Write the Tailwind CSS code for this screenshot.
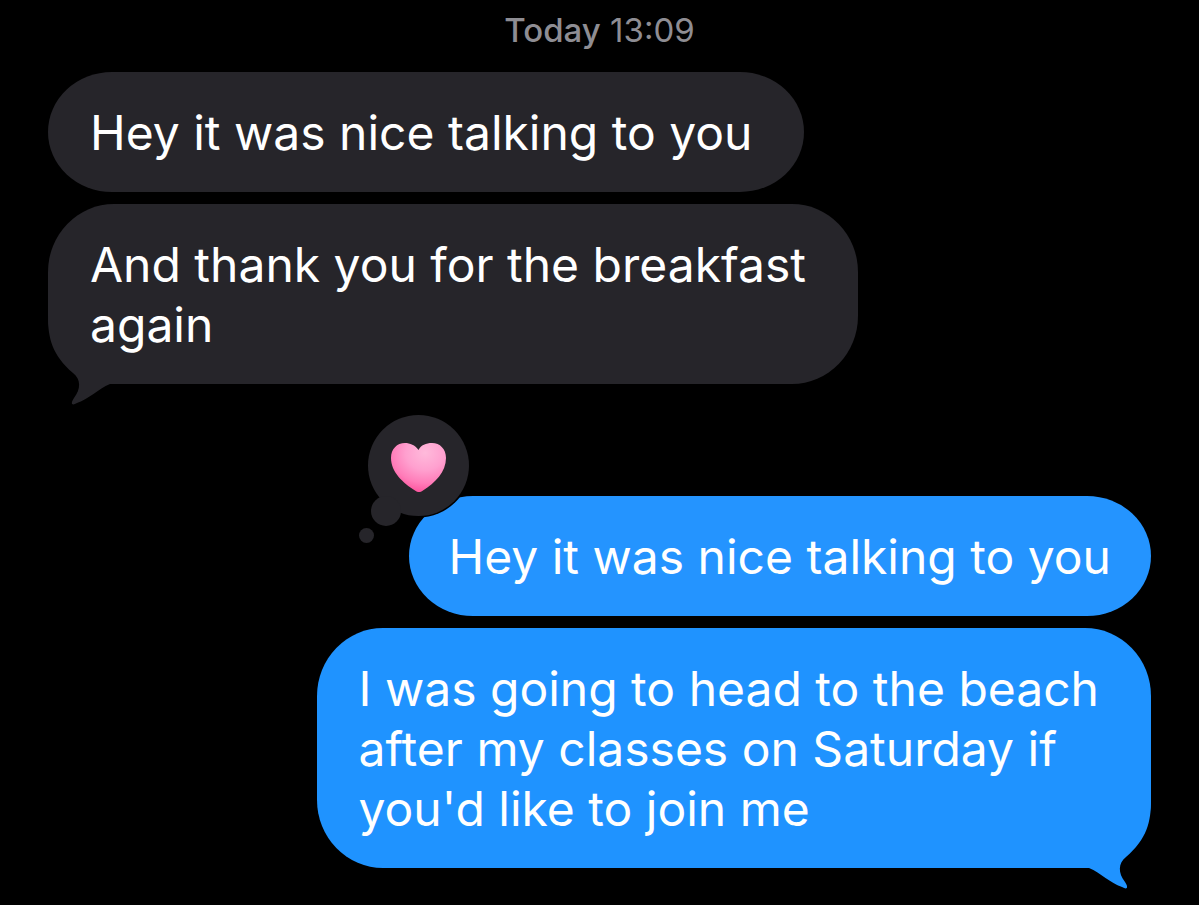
<!DOCTYPE html>
<html lang="en">
<head>
    <meta charset="UTF-8" />
    <meta name="viewport" content="width=device-width, initial-scale=1" />
    <title>Messages</title>
    <!-- Tailwind CSS -->
    <script src="https://cdn.jsdelivr.net/npm/@tailwindcss/browser@4"></script>
</head>
<body class="bg-black min-h-screen font-['Inter',sans-serif]">
    <main class="px-12 pt-[7px]">
        <p class="text-center text-[33px] leading-[46px] text-[#8e8d93]"><time><span class="font-medium">Today</span> 13:09</time></p>

        <ol class="mt-[19px] flex flex-col text-[48px] leading-[60px] text-white">
            <!-- Received -->
            <li class="self-start rounded-[64px/60px] bg-[#26252a] pt-[31px] pb-[29px] pl-[42px] pr-[52px]">
                <p>Hey it was nice talking to you</p>
            </li>
            <li class="relative mt-3 self-start rounded-[66px/68px] bg-[#26252a] pt-[31px] pb-[29px] pl-[42px] pr-[52px]">
                <svg class="absolute -bottom-6 left-0 w-[72px] h-[92px]" viewBox="0 0 72 92" fill="#26252a" aria-hidden="true">
                    <path d="M0 0C0 22 4 39 25 57C33 63 33 73 26 82C22 88 24 90 29 87C41 83 50 73 62 68H72V0Z" />
                </svg>
                <p class="relative">And thank you for the breakfast<br />again</p>
            </li>

            <!-- Sent -->
            <li class="relative mt-28 self-end rounded-[64px/60px] bg-[#2494ff] px-10 pt-[31px] pb-[29px]">
                <svg class="absolute -top-[84px] -left-[53px] w-[116px] h-[134px]" viewBox="0 0 116 134" role="img" aria-label="Heart reaction">
                    <defs>
                        <radialGradient id="heart" cx="0.62" cy="0.2" r="0.88">
                            <stop offset="0" stop-color="#ffbadb" />
                            <stop offset="0.4" stop-color="#ffa0cf" />
                            <stop offset="0.7" stop-color="#ff7db9" />
                            <stop offset="1" stop-color="#fb4795" />
                        </radialGradient>
                    </defs>
                    <circle cx="62.500" cy="53.500" r="52" fill="#000" />
                    <circle cx="62.500" cy="53.500" r="50.500" fill="#26252a" />
                    <circle cx="30" cy="99" r="15" fill="#26252a" />
                    <circle cx="10.500" cy="123.500" r="7.500" fill="#26252a" />
                    <path fill="url(#heart)" d="M62.500 38C59 33 54 31 49 31C41 31 35 37 35 46C35 60 47 71 59 78.500C62 80.500 64 80.500 67 78.500C79 71 90 60 90 46C90 37 84 31 76 31C70 31 65 33 62.500 38Z" />
                </svg>
                <p class="relative">Hey it was nice talking to you</p>
            </li>
            <li class="relative mt-3 self-end rounded-[66px/68px] bg-[#1f93ff] pl-[42px] pr-[52px] pt-[31px] pb-[29px]">
                <svg class="absolute -bottom-6 right-0 w-[72px] h-[92px] -scale-x-100" viewBox="0 0 72 92" fill="#1f93ff" aria-hidden="true">
                    <path d="M0 0C0 22 4 39 25 57C33 63 33 73 26 82C22 88 24 90 29 87C41 83 50 73 62 68H72V0Z" />
                </svg>
                <p class="relative">I was going to head to the beach<br />after my classes on Saturday if<br />you'd like to join me</p>
            </li>
        </ol>
    </main>
</body>
</html>
